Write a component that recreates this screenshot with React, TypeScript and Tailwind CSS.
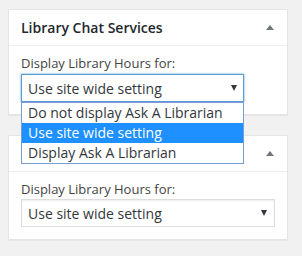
import React from "react";

function UpArrow() {
  return (
    <svg width="8" height="5" viewBox="0 0 8 5" className="block">
      <path d="M0 5 L4 0 L8 5 Z" fill="#72777c" />
    </svg>
  );
}

function DownArrow() {
  return (
    <svg width="6" height="6" viewBox="0 0 6 6" className="block">
      <path d="M0 0 L6 0 L3 6 Z" fill="#32373c" />
    </svg>
  );
}

function Panel({ title, children }: { title?: string; children: React.ReactNode }) {
  return (
    <div className="w-[280px] bg-white border border-[#e5e5e5] shadow-[0_1px_1px_rgba(0,0,0,0.04)]">
      <div className="h-[36px] flex items-center justify-between px-3 border-b border-[#eeeeee]">
        <span className="text-[14px] font-semibold text-[#23282d] leading-[20px]">{title}</span>
        <span className="mr-[1px]"><UpArrow /></span>
      </div>
      <div className="px-3 pt-2 pb-3">{children}</div>
    </div>
  );
}

export default function App() {
  return (
    <div className="w-[302px] h-[256px] bg-[#f1f1f1] pt-[9px] pl-[8px] font-['Open_Sans',sans-serif] relative">
      <Panel title="Library Chat Services">
        <div className="text-[13px] leading-[18px] text-[#444444] mb-[2px]">Display Library Hours for:</div>
        <div className="relative w-[223px]">
          <div className="h-[28px] border border-[#5b9dd9] shadow-[0_0_2px_rgba(30,140,190,0.8)] flex items-center justify-between pl-[6px] pr-[6px] text-[14px] text-[#32373c]">
            <span>Use site wide setting</span>
            <DownArrow />
          </div>
          <div className="absolute left-0 top-[28px] w-[223px] bg-white border border-[#7a9cd3] text-[14px] text-[#32373c] z-10">
            <div className="h-[20px] leading-[20px] pl-[6px]">Do not display Ask A Librarian</div>
            <div className="h-[20px] leading-[20px] pl-[6px] bg-[#1e90ff] text-white">Use site wide setting</div>
            <div className="h-[20px] leading-[20px] pl-[6px]">Display Ask A Librarian</div>
          </div>
        </div>
      </Panel>
      <div className="h-[20px]" />
      <Panel title="">
        <div className="text-[13px] leading-[18px] text-[#444444] mb-[1px]">Display Library Hours for:</div>
        <div className="h-[28px] w-full border border-[#dddddd] shadow-[inset_0_1px_2px_rgba(0,0,0,0.07)] flex items-center justify-between pl-[6px] pr-[7px] text-[14px] text-[#32373c]">
          <span>Use site wide setting</span>
          <DownArrow />
        </div>
      </Panel>
    </div>
  );
}
